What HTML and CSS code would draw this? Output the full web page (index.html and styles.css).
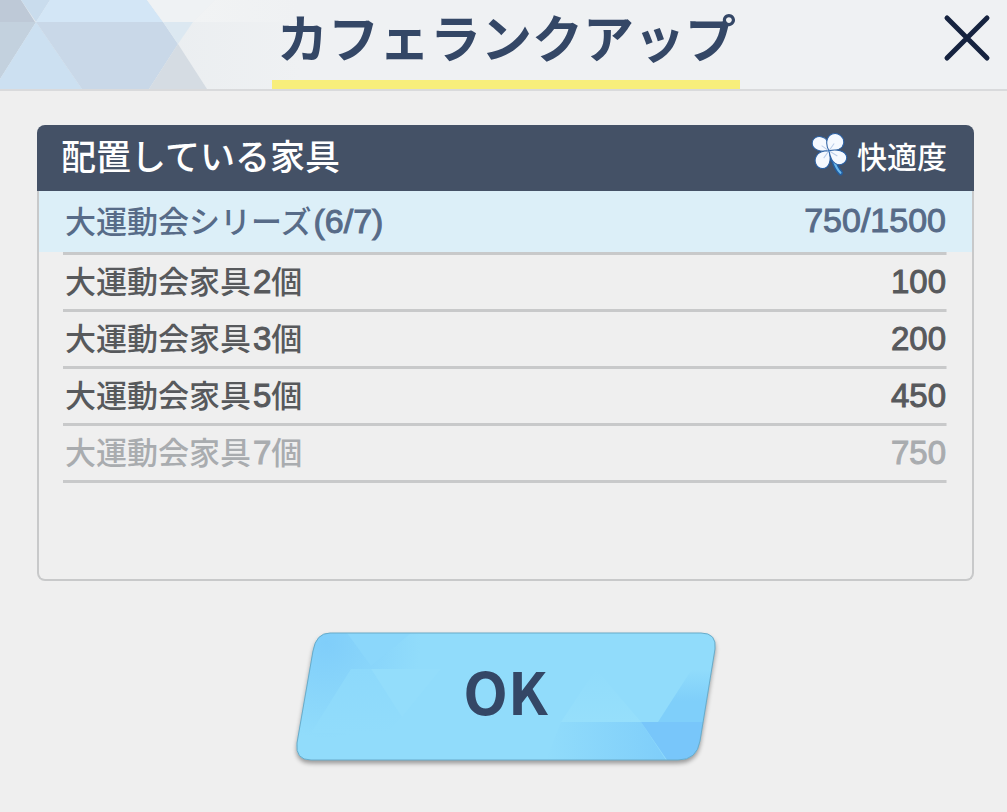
FILE: index.html
```html
<!DOCTYPE html>
<html lang="ja">
<head>
    <meta charset="UTF-8" />
    <meta name="viewport" content="width=device-width, initial-scale=1.0" />
    <title>カフェランクアップ</title>
    <link rel="stylesheet" href="styles.css">
</head>
<body>
    <div class="dialog">
        <!-- Title bar -->
        <header class="dialog-header">
            <svg class="header-pattern" width="300" height="89" viewBox="0 0 300 89" aria-hidden="true">
                <defs>
                    <linearGradient id="fade" x1="0" x2="1">
                        <stop offset="0" stop-color="#e5eaed" />
                        <stop offset="1" stop-color="#eff1f3" />
                    </linearGradient>
                    <linearGradient id="fade-top" x1="0" x2="1">
                        <stop offset="0" stop-color="#f1f3f4" />
                        <stop offset="1" stop-color="#eff1f3" />
                    </linearGradient>
                </defs>
                <rect width="300" height="89" fill="url(#fade)" />
                <path d="M0 0H21L35 22H0Z" fill="#bec9d7" />
                <path d="M21 0H50L36 22Z" fill="#c9dced" />
                <path d="M50 0H147L163 22H36Z" fill="#d3e6f6" />
                <path d="M147 0H215L193 22H163Z" fill="#eff2f4" />
                <path d="M215 0H300V22H193Z" fill="url(#fade-top)" />
                <path d="M0 22H36L0 79Z" fill="#c3d1de" />
                <path d="M36 22L82 89H0V79Z" fill="#cce0f1" />
                <path d="M36 22H163L178 44L149 89H82Z" fill="#c9d8e8" />
                <path d="M163 22H193L178 44Z" fill="#dce8f1" />
                <path d="M178 44L207 89H149Z" fill="#d5dce3" />
            </svg>
            <h1 class="title">カフェランクアップ</h1>
            <button class="close" type="button" aria-label="閉じる">
                <svg width="48" height="48" viewBox="0 0 48 48" aria-hidden="true">
                    <path d="M4 4L44 44M44 4L4 44" fill="none" stroke="#16233f" stroke-width="5" stroke-linecap="round" />
                </svg>
            </button>
        </header>

        <main class="content">
            <!-- Furniture list -->
            <section class="panel">
                <div class="panel-header">
                    <h2 id="furniture-title">配置している家具</h2>
                    <div class="comfort">
                        <svg width="38" height="44" viewBox="0 0 36 42" aria-hidden="true">
                            <path d="M18 18C22 25 22 32 28 38" fill="none" stroke="#245e9f" stroke-width="5" stroke-linecap="round" />
                            <path d="M18 18C22 25 22 32 28 38" fill="none" stroke="#68b7ed" stroke-width="2" stroke-linecap="round" />
                            <g fill="#f5f9ff" stroke="#2b60a3" stroke-width="1">
                                <path d="M17 17C8 19 1 15 1 10C1 5 6 2 11 4C16 5 17 10 17 17Z" />
                                <path d="M17 17C13 10 15 3 20 1C26 -1 32 4 31 10C30 16 23 17 17 17Z" />
                                <path d="M17 17C20 26 17 34 11 34C5 34 2 27 5 22C7 18 12 17 17 17Z" />
                                <path d="M17 17C24 15 33 17 34 23C34 29 28 32 23 29C19 27 18 22 17 17Z" />
                            </g>
                            <path d="M17 17L10 12M17 17L22 10M17 17L12 24M17 17L25 22" stroke="#b9cce8" stroke-width="1" />
                            <circle cx="17" cy="17" r="1" fill="#3973b8" />
                        </svg>
                        <span>快適度</span>
                    </div>
                </div>
                <div class="panel-body">
                    <table class="list" aria-labelledby="furniture-title">
                        <tbody>
                            <tr class="series">
                                <th scope="row">大運動会シリーズ<span class="num">(6/7)</span></th>
                                <td>750/1500</td>
                            </tr>
                            <tr>
                                <th scope="row">大運動会家具<span class="num">2</span>個</th>
                                <td>100</td>
                            </tr>
                            <tr>
                                <th scope="row">大運動会家具<span class="num">3</span>個</th>
                                <td>200</td>
                            </tr>
                            <tr>
                                <th scope="row">大運動会家具<span class="num">5</span>個</th>
                                <td>450</td>
                            </tr>
                            <tr class="locked">
                                <th scope="row">大運動会家具<span class="num">7</span>個</th>
                                <td>750</td>
                            </tr>
                        </tbody>
                    </table>
                </div>
            </section>

            <button class="ok" type="button">
                <svg class="ok-shape" viewBox="0 0 420 127" aria-hidden="true">
                    <defs>
                        <clipPath id="ok-clip">
                            <path d="M34 0H405Q421 0 419 16L404 108Q401 127 382 127H15Q-1 127 1 110L17 18Q20 0 34 0Z" />
                        </clipPath>
                        <radialGradient id="ok-left" gradientUnits="userSpaceOnUse" cx="30" cy="10" r="95">
                            <stop offset="0" stop-color="#80cefa" />
                            <stop offset="1" stop-color="#91dcfb" />
                        </radialGradient>
                        <linearGradient id="ok-right" x1="0" x2="1">
                            <stop offset="0" stop-color="#91dcfb" />
                            <stop offset="1" stop-color="#7fcefa" />
                        </linearGradient>
                        <linearGradient id="ok-edge" x1="0" y1="0" x2="0" y2="1">
                            <stop offset="0" stop-color="#91dcfb" />
                            <stop offset="0.6" stop-color="#7fcffa" />
                        </linearGradient>
                        <linearGradient id="ok-facet" x1="0" y1="0" x2="0" y2="1">
                            <stop offset="0" stop-color="#8dd9fb" />
                            <stop offset="1" stop-color="#91dcfb" />
                        </linearGradient>
                        <linearGradient id="ok-facet-low" x1="0" y1="0" x2="0" y2="1">
                            <stop offset="0" stop-color="#91dcfb" />
                            <stop offset="1" stop-color="#96dffb" />
                        </linearGradient>
                    </defs>
                    <g clip-path="url(#ok-clip)">
                        <rect width="420" height="127" fill="#91dcfb" />
                        <path d="M0 0H150V127H0Z" fill="url(#ok-left)" />
                        <path d="M51 0H115L75 33Z" fill="#8bd7fb" />
                        <path d="M55 36H75L106 84L90 100H15Z" fill="url(#ok-facet)" />
                        <path d="M75 36H145L106 84Z" fill="#93ddfb" />
                        <path d="M300 36L345 89H265Z" fill="url(#ok-facet-low)" />
                        <path d="M265 89H345L370 127H250Z" fill="url(#ok-right)" />
                        <path d="M420 36H396L362 89H420Z" fill="url(#ok-edge)" />
                        <path d="M345 89H420V127H371Z" fill="#78c6fa" />
                    </g>
                    <path d="M34 0H405Q421 0 419 16L404 108Q401 127 382 127H15Q-1 127 1 110L17 18Q20 0 34 0Z" fill="none" stroke="#68abc9" stroke-width="1" />
                </svg>
                <span class="ok-label">OK</span>
            </button>
        </main>
    </div>
</body>
</html>
```
FILE: styles.css
```css
* {
    box-sizing: border-box;
}

body {
    margin: 0;
    background: #efefef;
    color: #57595c;
    font-family: "Noto Sans CJK JP", sans-serif;
}

button {
    padding: 0;
    border: 0;
    background: none;
    font-family: inherit;
    cursor: pointer;
}

svg {
    display: block;
}

/* Title bar */
.dialog-header {
    position: relative;
    display: grid;
    grid-template-columns: 64px 1fr 64px;
    align-items: start;
    height: 91px;
    padding-left: 5px;
    background: #eff1f3;
    border-bottom: 2px solid #d9dadc;
}

.header-pattern {
    position: absolute;
    top: 0;
    left: 0;
}

.title {
    position: relative;
    grid-column: 2;
    justify-self: center;
    height: 89px;
    margin: 0;
    padding: 0 4px 0 5px;
    border-bottom: 9px solid #f8ee7b;
    color: #344766;
    font-size: 51px;
    font-weight: 700;
    line-height: 72px;
    white-space: nowrap;
}

.close {
    justify-self: start;
    margin-top: 14px;
}

/* Furniture list */
.content {
    display: flex;
    flex-direction: column;
    padding: 34px 33px 48px 37px;
}

.panel-header {
    display: flex;
    align-items: center;
    justify-content: space-between;
    height: 66px;
    padding: 0 27px 6px 24px;
    border-radius: 8px 8px 0 0;
    background: #445166;
    color: #fff;
}

.panel-header h2 {
    margin: 0;
    font-size: 35px;
    font-weight: 500;
    line-height: 60px;
}

.comfort {
    display: flex;
    align-items: center;
    gap: 8px;
    font-size: 30px;
    font-weight: 500;
    line-height: 60px;
}

.panel-body {
    min-height: 390px;
    border: 2px solid #c8c9ca;
    border-top: 0;
    border-radius: 0 0 8px 8px;
}

.list {
    width: 100%;
    border-collapse: collapse;
}

.list th,
.list td {
    height: 57px;
    padding: 0 26px 7px;
    background: linear-gradient(#c8c9ca, #c8c9ca) no-repeat;
    background-size: 100% 3px;
    line-height: 48px;
    white-space: nowrap;
}

/* the divider stops short of the panel edges */
.list th {
    background-position: left 24px bottom;
    font-size: 31px;
    font-weight: 500;
    text-align: left;
}

.list td {
    padding-bottom: 4px;
    background-position: right 25px bottom;
    text-align: right;
}

.list td,
.num {
    font-family: "Liberation Sans", Arial, sans-serif;
    font-size: 33px;
    font-weight: 400;
    -webkit-text-stroke: 1px currentColor;
}

.num {
    margin-left: 2px;
    line-height: 1;
}

.list .series th,
.list .series td {
    height: 64px;
    padding-bottom: 6px;
    background-image: linear-gradient(#c8c9ca, #c8c9ca), linear-gradient(#dceff8, #dceff8);
    background-size: 100% 3px, 100% 61px;
    color: #576b88;
}

.list .series th {
    background-position: left 24px bottom, left top;
}

.list .series td {
    background-position: right 25px bottom, left top;
}

.list .series td,
.series .num {
    font-size: 34px;
}

.list .locked {
    color: #a9acaf;
}

/* OK button */
.ok {
    display: grid;
    align-self: center;
    width: 420px;
    max-width: 100%;
    margin-top: 52px;
    color: #344766;
}

.ok-shape,
.ok-label {
    grid-area: 1 / 1;
}

.ok-shape {
    width: 100%;
    overflow: visible;
    filter: drop-shadow(0 3px 2px rgba(0, 0, 0, 0.35));
}

.ok-label {
    z-index: 1;
    place-self: center;
    padding-bottom: 14px;
    font-size: 58px;
    font-weight: 700;
    line-height: 72px;
}
```
